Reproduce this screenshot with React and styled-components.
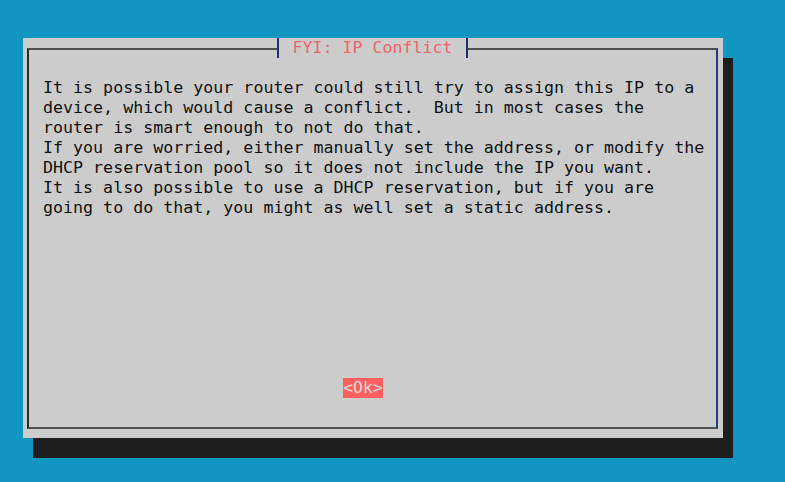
import styled, { createGlobalStyle } from 'styled-components'

const GlobalStyle = createGlobalStyle`
    html, body {
        margin:0;
        padding:0;
        background:#1296bf;
    }
    body{
        font-family:"DejaVu Sans Mono", "Liberation Mono", monospace;
        font-size:16.4px;
        line-height:20px;
    }
`;

const lines = [
    'It is possible your router could still try to assign this IP to a',
    'device, which would cause a conflict.  But in most cases the',
    'router is smart enough to not do that.',
    'If you are worried, either manually set the address, or modify the',
    'DHCP reservation pool so it does not include the IP you want.',
    'It is also possible to use a DHCP reservation, but if you are',
    'going to do that, you might as well set a static address.',
]

function App() {
    return (
        <Screen>
            <GlobalStyle />
            <Dialog>
                <Title>FYI: IP Conflict</Title>
                <Frame>
                    <Message>
                        {lines.map((l, i) => <Line key={i}>{l}</Line>)}
                    </Message>
                    <Buttons>
                        <OkButton>&lt;Ok&gt;</OkButton>
                    </Buttons>
                </Frame>
            </Dialog>
        </Screen>
    )
}

export default App;

const Screen = styled.div`
    width:785px;
    height:482px;
    box-sizing:border-box;
    padding:38px 0 0 23px;
    overflow:hidden;
`;

const Dialog = styled.div`
    position:relative;
    width:700px;
    height:400px;
    box-sizing:border-box;
    background:#cccccc;
    box-shadow:10px 20px 0 #1e1e1e;
    padding:10px 5px 9px 4px;
    display:flex;
`;

const Frame = styled.div`
    flex:1;
    display:flex;
    flex-direction:column;
    border-top:2px solid #505050;
    border-bottom:2px solid #505050;
    border-left:2px solid #2e2a2c;
    border-right:2px solid #263a80;
`;

const Title = styled.div`
    position:absolute;
    top:0;
    left:254px;
    width:191px;
    height:20px;
    box-sizing:border-box;
    display:flex;
    align-items:center;
    justify-content:center;
    background:#cccccc;
    border-left:2px solid #1f2f70;
    border-right:2px solid #1f2f70;
    color:#f06464;
    font-size:16.6px;
    z-index:1;
`;

const Message = styled.div`
    flex:1;
    padding:28px 0 0 14px;
    color:#111111;
    font-size:16.65px;
`;

const Line = styled.div`
    white-space:pre;
    height:20px;
`;

const Buttons = styled.div`
    display:flex;
    justify-content:flex-start;
    padding:0 0 29px 314px;
`;

const OkButton = styled.span`
    display:inline-block;
    height:20px;
    width:40px;
    text-align:center;
    background:#ff5f5f;
    color:#d8d8d8;
    white-space:pre;
`;
